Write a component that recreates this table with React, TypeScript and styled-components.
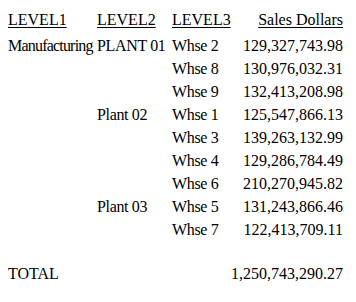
import React from "react";
import styled, { createGlobalStyle, css } from "styled-components";

const GlobalStyle = createGlobalStyle`
  body {
    margin: 0;
    background: #ffffff;
    color: #000000;
  }
`;

type Row = { level1?: string; level2?: string; level3: string; sales: string };

const rows: Row[] = [
  { level1: "Manufacturing", level2: "PLANT 01", level3: "Whse 2", sales: "129,327,743.98" },
  { level3: "Whse 8", sales: "130,976,032.31" },
  { level3: "Whse 9", sales: "132,413,208.98" },
  { level2: "Plant 02", level3: "Whse 1", sales: "125,547,866.13" },
  { level3: "Whse 3", sales: "139,263,132.99" },
  { level3: "Whse 4", sales: "129,286,784.49" },
  { level3: "Whse 6", sales: "210,270,945.82" },
  { level2: "Plant 03", level3: "Whse 5", sales: "131,243,866.46" },
  { level3: "Whse 7", sales: "122,413,709.11" },
];

export default function App() {
  return (
    <>
      <GlobalStyle />
      <Report>
        <HeadCell>LEVEL1</HeadCell>
        <HeadCell>LEVEL2</HeadCell>
        <HeadCell>LEVEL3</HeadCell>
        <HeadCell $right>Sales Dollars</HeadCell>
        {rows.map((r, i) => (
          <React.Fragment key={i}>
            <Label $tight>{r.level1}</Label>
            <Label>{r.level2}</Label>
            <Label>{r.level3}</Label>
            <Amount>{r.sales}</Amount>
          </React.Fragment>
        ))}
        <Blank />
        <TotalLabel>TOTAL</TotalLabel>
        <Amount>1,250,743,290.27</Amount>
      </Report>
    </>
  );
}

const reportText = css`
  font-family: "Liberation Serif", serif;
  font-size: 16px;
  line-height: 23px;
  color: #000000;
  white-space: nowrap;
`;

const Report = styled.div`
  display: grid;
  grid-template-columns: 89px 75px 58px 113px;
  grid-template-rows: 26px repeat(9, 23px) 21px 23px;
  padding: 8px 0 0 8px;
`;

const Label = styled.div<{ $tight?: boolean }>`
  ${reportText}
  letter-spacing: ${(p) => (p.$tight ? "-0.8px" : "-0.35px")};
`;

const Amount = styled.div`
  ${reportText}
  text-align: right;
`;

const HeadCell = styled.div<{ $right?: boolean }>`
  ${reportText}
  text-align: ${(p) => (p.$right ? "right" : "left")};
  text-decoration: underline;
  text-underline-offset: 2px;
`;

const Blank = styled.div`
  grid-column: 1 / -1;
`;

const TotalLabel = styled.div`
  ${reportText}
  grid-column: 1 / 4;
`;
